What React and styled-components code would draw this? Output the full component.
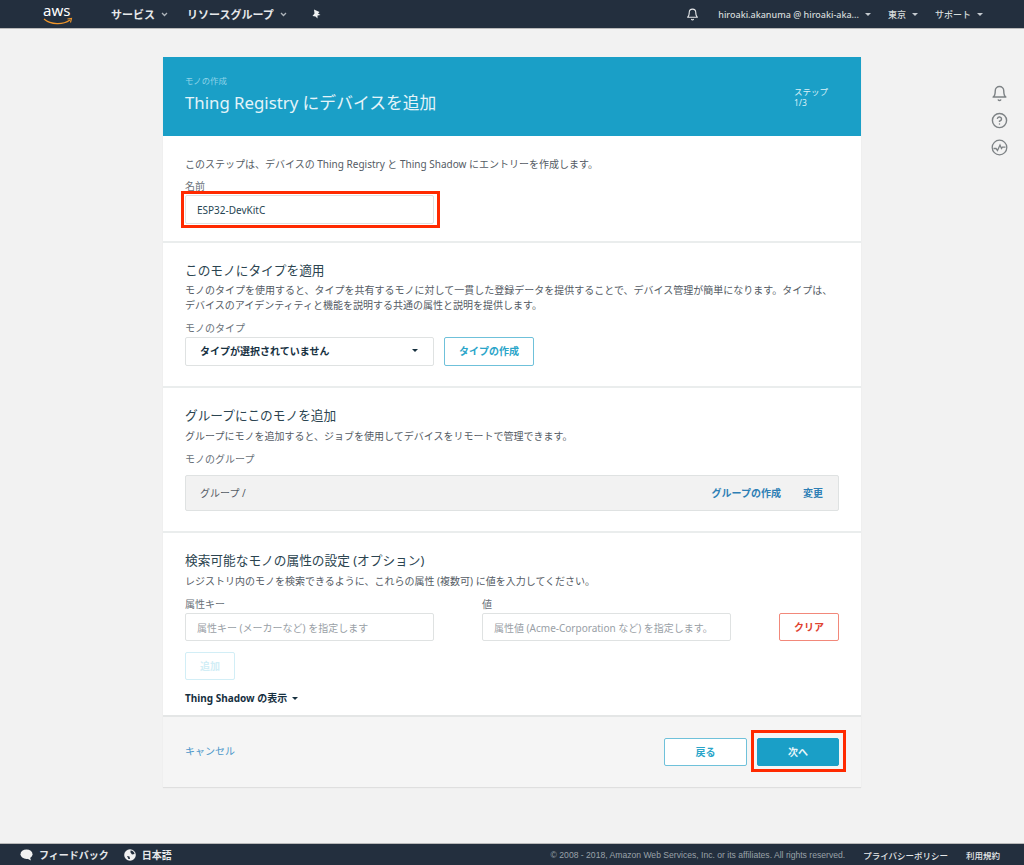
import React from 'react'
import styled, { createGlobalStyle } from 'styled-components'
import { FiBell, FiHelpCircle } from 'react-icons/fi'

const Global = createGlobalStyle`
  html, body { margin: 0; padding: 0; }
  body {
    background: #f2f2f2;
    font-family: "Noto Sans", "Noto Sans CJK JP", sans-serif;
    color: #545b64;
  }
  * { box-sizing: border-box; }
`

const Page = styled.div`
  height: 865px;
  display: flex;
  flex-direction: column;
`

const TopBar = styled.header`
  height: 29px;
  flex: none;
  background: #232f3e;
  border-bottom: 1px solid #b9b9b9;
  display: flex;
  align-items: center;
  color: #e6e8ea;
  padding-left: 43px;
`

const LogoWrap = styled.div`
  width: 68px;
  height: 28px;
  flex: none;
`

const NavItem = styled.div`
  display: flex;
  align-items: center;
  gap: 6px;
  font-size: 11px;
  font-weight: 700;
  margin-right: ${p => p.$mr || 0}px;
  white-space: nowrap;
`

const NavRight = styled.div`
  margin-left: auto;
  display: flex;
  align-items: center;
  color: #d5dbdb;
`

const SmallNav = styled.div`
  display: flex;
  align-items: center;
  gap: 6px;
  font-size: 9px;
  font-weight: 500;
  margin-right: ${p => p.$mr || 0}px;
  white-space: nowrap;
`

const Content = styled.main`
  flex: 1;
  display: grid;
  grid-template-columns: 163px 698px 1fr;
  align-content: start;
  padding-top: 28px;
`

const Card = styled.div`
  grid-column: 2;
  height: 730px;
  background: #fff;
  display: flex;
  flex-direction: column;
  box-shadow: 0 1px 1px rgba(0,0,0,0.08);
`

const Hero = styled.div`
  height: 79px;
  flex: none;
  background: #1a9fc7;
  padding: 18px 34px 0 22px;
  display: flex;
  justify-content: space-between;
  color: #d9f0f7;
`

const HeroSmall = styled.div`
  font-size: 8.4px;
  line-height: 12px;
  color: #8fd3e8;
`

const HeroTitle = styled.h1`
  margin: 4px 0 0;
  font-size: 16.8px;
  line-height: 24px;
  font-weight: 400;
  color: #e4f4f9;
`

const Step = styled.div`
  font-size: 8.5px;
  line-height: 11px;
  margin-top: 11px;
  width: 33px;
  white-space: nowrap;
`

const Section = styled.section`
  height: ${p => p.$h}px;
  flex: none;
  padding: ${p => p.$pt}px 22px 0;
  border-bottom: ${p => (p.$last ? 'none' : '2px solid #eaeded')};
`

const SectionTitle = styled.h2`
  margin: 0;
  font-size: 12.7px;
  line-height: 18px;
  font-weight: 400;
  color: #2b4450;
`

const Desc = styled.p`
  margin: ${p => p.$mt || 0}px 0 0;
  font-size: 10px;
  line-height: 15px;
  color: #545b64;
`

const Label = styled.div`
  margin-top: ${p => p.$mt || 0}px;
  margin-bottom: ${p => p.$mb || 0}px;
  font-size: 10px;
  line-height: 14px;
  color: #687078;
`

const InputBox = styled.div`
  position: relative;
  width: 249px;
  height: ${p => (p.$placeholder ? 28 : 29)}px;
  background: #fff;
  border: 1px solid #dfe2e2;
  border-radius: 2px;
  display: flex;
  align-items: center;
  padding-left: 11px;
  font-size: 10px;
  color: ${p => (p.$placeholder ? '#99a0a6' : '#264653')};
  white-space: nowrap;
  ${p => p.$marked && `
    &::after {
      content: "";
      position: absolute;
      left: -5px;
      right: -7px;
      top: -5px;
      bottom: -5px;
      border: 3px solid #ff2a00;
    }
  `}
`

const Row = styled.div`
  display: flex;
  align-items: center;
  gap: ${p => p.$gap || 10}px;
`

const SelectBox = styled(InputBox)`
  font-weight: 700;
  padding: 0 15px 2px 14px;
  justify-content: space-between;
  color: #16303f;
`

const Caret = styled.span`
  width: 0;
  height: 0;
  border-left: 3px solid transparent;
  border-right: 3px solid transparent;
  border-top: 3px solid ${p => p.$color || '#16303f'};
`

const Button = styled.button`
  position: relative;
  width: ${p => p.$w}px;
  height: ${p => p.$height || 28}px;
  margin-top: ${p => p.$mt || 0}px;
  border-radius: 2px;
  background: ${p => (p.$primary ? '#1a9fc7' : p.$bg || '#fff')};
  border: 1px solid ${p => p.$border || '#6fc1da'};
  color: ${p => p.$color || '#2aa5c9'};
  font-family: inherit;
  font-size: 10px;
  font-weight: 700;
  padding: 0 0 2px;
  ${p => p.$marked && `
    &::after {
      content: "";
      position: absolute;
      left: -7px;
      right: -8px;
      top: -9px;
      bottom: -7px;
      border: 3px solid #ff2a00;
    }
  `}
`

const GroupBar = styled.div`
  margin-top: 9px;
  height: 36px;
  background: #f2f2f2;
  border: 1px solid #dfe2e2;
  border-radius: 2px;
  display: flex;
  align-items: center;
  padding: 0 15px 2px 14px;
  font-size: 10px;
  color: #545b64;
`

const GroupLink = styled.span`
  font-weight: 700;
  color: #2e7fb5;
  margin-left: ${p => p.$ml};
`

const AttrGrid = styled.div`
  margin-top: 8px;
  display: grid;
  grid-template-columns: 249px 249px 1fr;
  column-gap: 48px;
  align-items: end;
`

const ClearWrap = styled.div`
  display: flex;
  justify-content: flex-end;
`

const ShadowToggle = styled.div`
  margin-top: 11px;
  display: flex;
  align-items: center;
  gap: 5px;
  font-size: 10px;
  line-height: 14px;
  font-weight: 700;
  color: #16303f;
`

const CardFooter = styled.div`
  flex: 1;
  background: #f5f5f5;
  border-top: 2px solid #e4e6e6;
  display: flex;
  align-items: center;
  justify-content: space-between;
  padding: 0 22px;
  font-size: 10px;
`

const CancelLink = styled.span`
  color: #4a95c9;
  padding-bottom: 3px;
`

const SideIcons = styled.aside`
  grid-column: 3;
  display: flex;
  flex-direction: column;
  align-items: flex-end;
  gap: 10px;
  padding: 28px 16px 0 0;
  color: #7d8285;
`

const BottomBar = styled.footer`
  height: 22px;
  flex: none;
  background: #232f3e;
  border-top: 1px solid #b9b9b9;
  display: flex;
  align-items: center;
  color: #e6e8ea;
  padding: 0 24px 0 20px;
  font-size: 10px;
  font-weight: 700;
`

const FootItem = styled.div`
  display: flex;
  align-items: center;
  gap: 6px;
  margin-right: ${p => p.$mr || 0}px;
`

const FootRight = styled.div`
  margin-left: auto;
  display: flex;
  align-items: center;
  font-weight: 500;
  font-size: 8.5px;
`

const Copyright = styled.span`
  font-family: "Liberation Sans", sans-serif;
  font-size: 8.6px;
  color: #9aa2a9;
  font-weight: 400;
  margin-right: 18px;
`

const FootLink = styled.span`
  margin-right: ${p => p.$mr || 0}px;
`

function AwsLogo() {
  return (
    <LogoWrap>
      <svg width="34" height="28" viewBox="0 0 34 28">
        <text x="0" y="16" fontFamily="Noto Sans" fontSize="15" fill="#fff">aws</text>
        <path d="M1 19 C8 25 20 25 27 20" fill="none" stroke="#f0962a" strokeWidth="1.3" />
        <path d="M24.5 19 L28.5 18.5 L27.5 22.5" fill="none" stroke="#f0962a" strokeWidth="1.1" />
      </svg>
    </LogoWrap>
  )
}

function Chevron() {
  return (
    <svg width="7" height="5" viewBox="0 0 7 5">
      <path d="M1 1 L3.5 3.5 L6 1" fill="none" stroke="#aeb5bb" strokeWidth="1.3" />
    </svg>
  )
}

function Pin() {
  return (
    <svg width="10" height="10" viewBox="0 0 10 10">
      <path d="M3 0.5 L8.5 3 L7 4.5 L9.5 6 L6.5 6.5 L6.5 9.5 L4.5 7.5 L1.5 7 L3.5 4.5 Z" fill="#f0f2f3" />
    </svg>
  )
}

function PulseIcon() {
  return (
    <svg width="17" height="17" viewBox="0 0 17 17">
      <circle cx="8.5" cy="8.5" r="7.3" fill="none" stroke="currentColor" strokeWidth="1.3" />
      <path d="M2.5 9.5 L5 9.5 L6.5 11.5 L9 6 L10.5 9.5 L11.5 8.2 L14.5 8.2" fill="none" stroke="currentColor" strokeWidth="1.3" />
    </svg>
  )
}

function Bubble() {
  return (
    <svg width="13" height="12" viewBox="0 0 13 12">
      <ellipse cx="6.5" cy="5.2" rx="6" ry="4.8" fill="#f2f2f2" />
      <path d="M6 9 L11 11.5 L9.5 7 Z" fill="#f2f2f2" />
    </svg>
  )
}

function Globe() {
  return (
    <svg width="12" height="12" viewBox="0 0 12 12">
      <circle cx="6" cy="6" r="5.8" fill="#f2f2f2" />
      <path d="M6.5 1.5 C9 1.5 10.5 3.5 10.5 5 L8 5.5 L6.5 3.5 Z M3 7 L5.5 7.5 L6 10 L4.5 10 Z" fill="#232f3e" />
    </svg>
  )
}

export default function App() {
  return (
    <Page>
      <Global />
      <TopBar>
        <AwsLogo />
        <NavItem $mr={19}>サービス <Chevron /></NavItem>
        <NavItem $mr={24}>リソースグループ <Chevron /></NavItem>
        <Pin />
        <NavRight>
          <FiBell size={13} color="#e6e8ea" style={{ marginRight: 19 }} />
          <SmallNav $mr={17}>hiroaki.akanuma @ hiroaki-aka... <Caret $color="#c4cacf" /></SmallNav>
          <SmallNav $mr={17}>東京 <Caret $color="#c4cacf" /></SmallNav>
          <SmallNav $mr={41}>サポート <Caret $color="#c4cacf" /></SmallNav>
        </NavRight>
      </TopBar>

      <Content>
        <Card>
          <Hero>
            <div>
              <HeroSmall>モノの作成</HeroSmall>
              <HeroTitle>Thing Registry にデバイスを追加</HeroTitle>
            </div>
            <Step>ステップ<br />1/3</Step>
          </Hero>

          <Section $h={107} $pt={21}>
            <Desc>このステップは、デバイスの Thing Registry と Thing Shadow にエントリーを作成します。</Desc>
            <Label $mt={7} $mb={2}>名前</Label>
            <InputBox $marked>ESP32-DevKitC</InputBox>
          </Section>

          <Section $h={145} $pt={18}>
            <SectionTitle>このモノにタイプを適用</SectionTitle>
            <Desc $mt={4}>モノのタイプを使用すると、タイプを共有するモノに対して一貫した登録データを提供することで、デバイス管理が簡単になります。タイプは、デバイスのアイデンティティと機能を説明する共通の属性と説明を提供します。</Desc>
            <Label $mt={8} $mb={2}>モノのタイプ</Label>
            <Row>
              <SelectBox>タイプが選択されていません<Caret /></SelectBox>
              <Button $w={90} $height={29}>タイプの作成</Button>
            </Row>
          </Section>

          <Section $h={145} $pt={18}>
            <SectionTitle>グループにこのモノを追加</SectionTitle>
            <Desc $mt={5}>グループにモノを追加すると、ジョブを使用してデバイスをリモートで管理できます。</Desc>
            <Label $mt={8}>モノのグループ</Label>
            <GroupBar>
              <span>グループ /</span>
              <GroupLink $ml="auto">グループの作成</GroupLink>
              <GroupLink $ml="22px">変更</GroupLink>
            </GroupBar>
          </Section>

          <Section $h={182} $pt={18} $last>
            <SectionTitle>検索可能なモノの属性の設定 (オプション)</SectionTitle>
            <Desc $mt={5}>レジストリ内のモノを検索できるように、これらの属性 (複数可) に値を入力してください。</Desc>
            <AttrGrid>
              <div>
                <Label $mb={2}>属性キー</Label>
                <InputBox $placeholder>属性キー (メーカーなど) を指定します</InputBox>
              </div>
              <div>
                <Label $mb={2}>値</Label>
                <InputBox $placeholder>属性値 (Acme-Corporation など) を指定します。</InputBox>
              </div>
              <ClearWrap>
                <Button $w={60} $height={28} $border="#f2887a" $color="#e0432f">クリア</Button>
              </ClearWrap>
            </AttrGrid>
            <Row>
              <Button $w={50} $mt={11} $border="#d2eef6" $color="#d2eef6">追加</Button>
            </Row>
            <ShadowToggle>Thing Shadow の表示 <Caret /></ShadowToggle>
          </Section>

          <CardFooter>
            <CancelLink>キャンセル</CancelLink>
            <Row>
              <Button $w={83} $bg="#fff">戻る</Button>
              <Button $w={82} $primary $border="#1a9fc7" $color="#e8f6fa" $marked>次へ</Button>
            </Row>
          </CardFooter>
        </Card>

        <SideIcons>
          <FiBell size={17} />
          <FiHelpCircle size={17} />
          <PulseIcon />
        </SideIcons>
      </Content>

      <BottomBar>
        <FootItem $mr={15}><Bubble /> フィードバック</FootItem>
        <FootItem><Globe /> 日本語</FootItem>
        <FootRight>
          <Copyright>© 2008 - 2018, Amazon Web Services, Inc. or its affiliates. All rights reserved.</Copyright>
          <FootLink $mr={18}>プライバシーポリシー</FootLink>
          <FootLink>利用規約</FootLink>
        </FootRight>
      </BottomBar>
    </Page>
  )
}
